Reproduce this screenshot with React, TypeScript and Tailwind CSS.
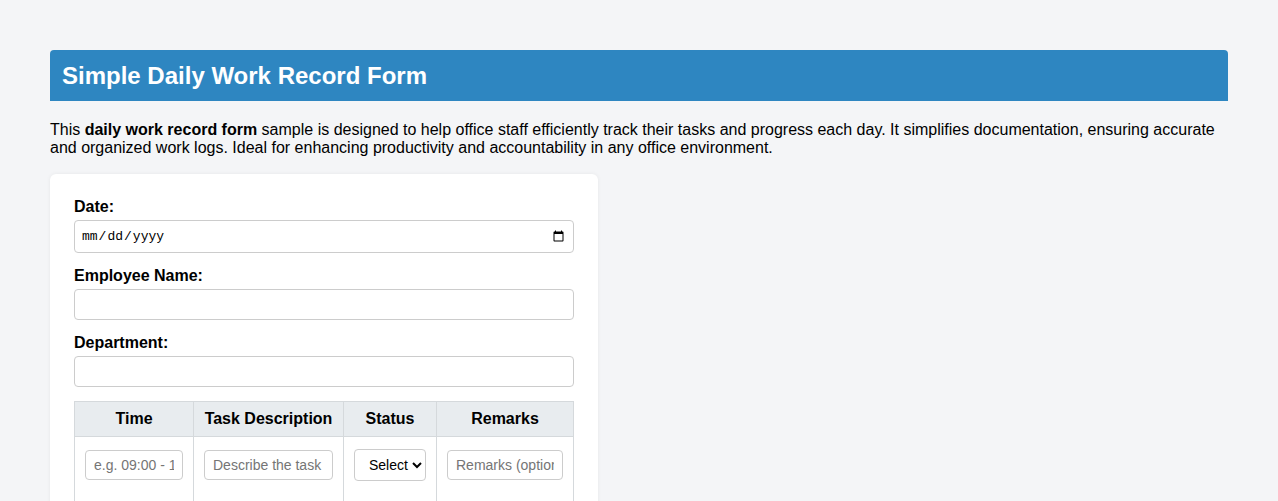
import { useState } from 'react';

const Field = ({ label, type = 'text' }: { label: string; type?: string }) => {
    const [value, setValue] = useState('');
    return (
        <div className="flex flex-col">
            <label className="text-base font-bold leading-[18px] mb-[4px] text-black">{label}</label>
            <input
                type={type}
                value={value}
                onChange={(e) => setValue(e.target.value)}
                className={
                    type === 'date'
                        ? 'h-[33px] w-full border border-[#ccc] rounded-[4px] px-[6px] text-[13px] font-["Liberation_Mono",monospace] bg-white mb-[14px]'
                        : 'h-[31px] w-full border border-[#ccc] rounded-[4px] px-[8px] text-sm bg-white mb-[14px]'
                }
            />
        </div>
    );
};

const App = () => {
    return (
        <div className="min-h-screen bg-[#f4f5f7] px-[50px] pt-[50px] font-['Liberation_Sans',Arial,sans-serif] text-black">
            <div className="bg-[#2e86c1] rounded-t-[4px] px-3 h-[51px] flex items-center">
                <h1 className="text-white text-2xl font-bold">Simple Daily Work Record Form</h1>
            </div>
            <p className="mt-[20px] text-base leading-[18px]">
                This <b>daily work record form</b> sample is designed to help office staff efficiently track their tasks and progress each day. It simplifies documentation, ensuring accurate and organized work logs. Ideal for enhancing productivity and accountability in any office environment.
            </p>
            <div className="mt-[17px] w-[548px] bg-white rounded-[6px] shadow-[0_0_4px_rgba(0,0,0,0.06)] p-6">
                <Field label="Date:" type="date" />
                <Field label="Employee Name:" />
                <Field label="Department:" />
                <table className="w-[500px] table-fixed border-collapse">
                    <thead>
                        <tr className="bg-[#e8ecef]">
                            <th className="w-[119px] border border-[#d5d9dc] h-[35px] font-bold text-base">Time</th>
                            <th className="w-[150px] border border-[#d5d9dc] h-[35px] font-bold text-base">Task Description</th>
                            <th className="w-[93px] border border-[#d5d9dc] h-[35px] font-bold text-base">Status</th>
                            <th className="w-[137px] border border-[#d5d9dc] h-[35px] font-bold text-base">Remarks</th>
                        </tr>
                    </thead>
                    <tbody>
                        <tr>
                            <td className="border border-[#d5d9dc] px-[10px] pt-[13px] pb-[24px] align-top">
                                <input placeholder="e.g. 09:00 - 10:00" className="w-full h-[30px] border border-[#ccc] rounded-[4px] px-[8px] text-sm placeholder:text-[#757575]" />
                            </td>
                            <td className="border border-[#d5d9dc] px-[10px] pt-[13px] pb-[24px] align-top">
                                <input placeholder="Describe the task" className="w-full h-[30px] border border-[#ccc] rounded-[4px] px-[8px] text-sm placeholder:text-[#757575]" />
                            </td>
                            <td className="border border-[#d5d9dc] px-[10px] pt-[12px] pb-[24px] align-top">
                                <select defaultValue="" className="w-full h-[32px] border border-[#ccc] rounded-[4px] pl-[10px] text-sm bg-white">
                                    <option value="">Select</option>
                                    <option>Pending</option>
                                    <option>In Progress</option>
                                    <option>Completed</option>
                                </select>
                            </td>
                            <td className="border border-[#d5d9dc] px-[10px] pt-[13px] pb-[24px] align-top">
                                <input placeholder="Remarks (optional)" className="w-full h-[30px] border border-[#ccc] rounded-[4px] px-[8px] text-sm placeholder:text-[#757575]" />
                            </td>
                        </tr>
                    </tbody>
                </table>
            </div>
        </div>
    );
};

export default App;
